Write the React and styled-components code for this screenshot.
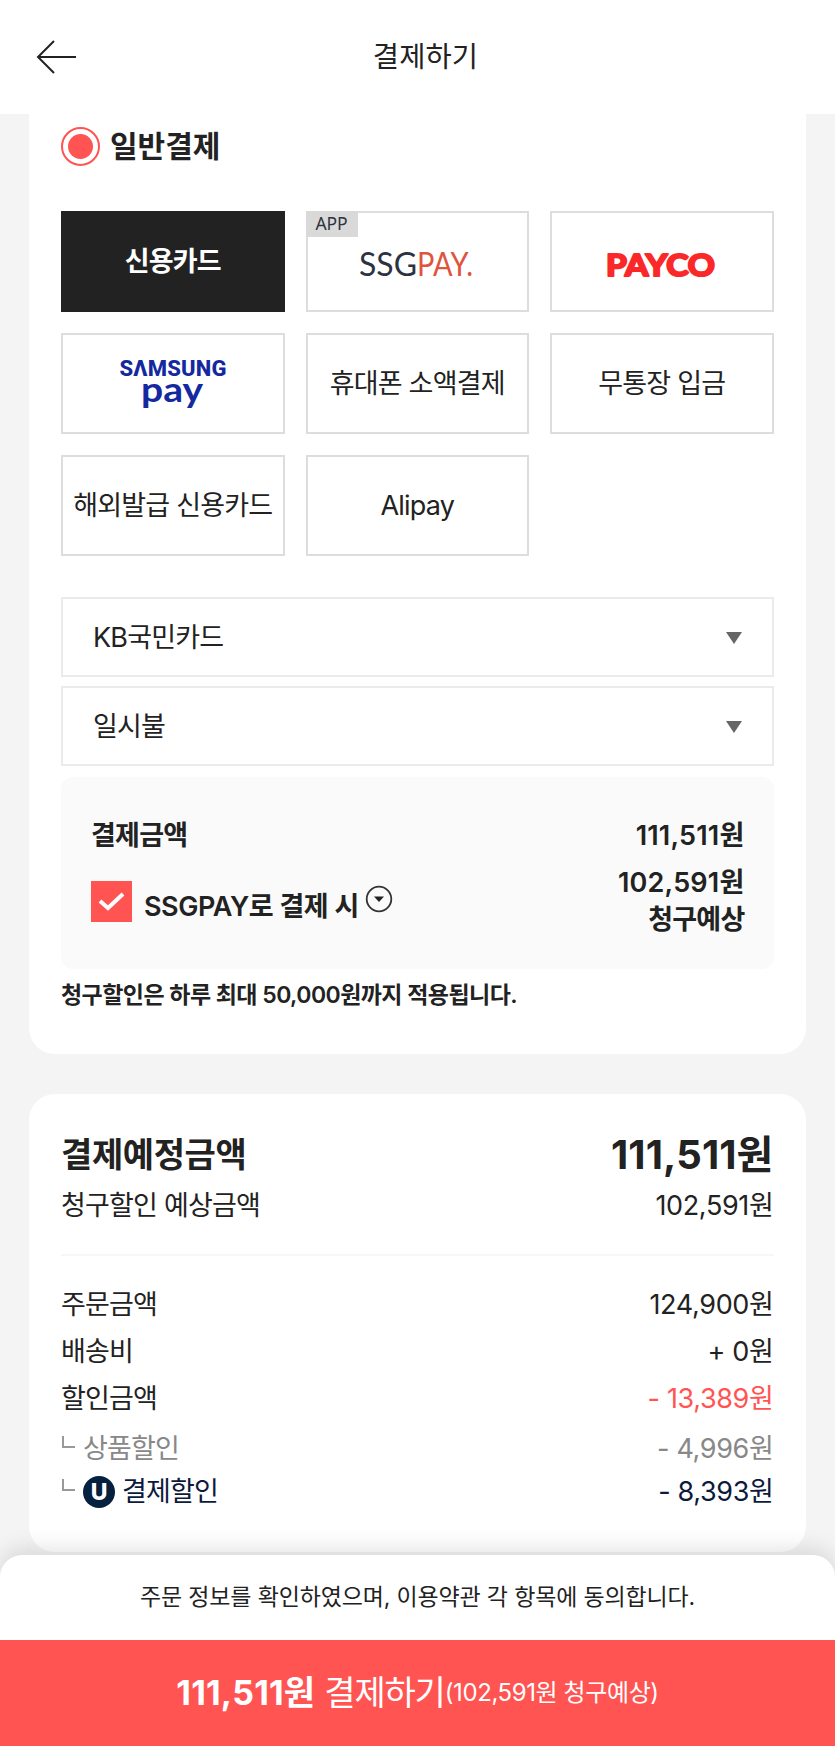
import React, { useState } from "react";
import styled, { createGlobalStyle } from "styled-components";

const GlobalStyle = createGlobalStyle`
  * {
    box-sizing: border-box;
  }
  body {
    margin: 0;
    background: #f4f4f4;
    color: #222;
    font-family: Inter, "Noto Sans CJK KR", sans-serif;
    font-weight: 400;
    line-height: 1.2;
  }
  button {
    font-family: inherit;
    font-weight: inherit;
    line-height: inherit;
    color: inherit;
    cursor: pointer;
  }
`;

const Page = styled.div`
  width: 835px;
  height: 1746px;
  overflow: hidden;
  display: flex;
  flex-direction: column;
`;

const Header = styled.header`
  display: grid;
  grid-template-columns: 96px 1fr 80px;
  align-items: center;
  flex: none;
  height: 114px;
  padding: 0 15px 1px;
  background: #fff;

  h1 {
    margin: 0;
    text-align: center;
    font-size: 28.5px;
    font-weight: 400;
    line-height: 40px;
    letter-spacing: 0.1px;
  }
`;

const BackButton = styled.button`
  display: flex;
  padding: 0 0 0 21px;
  border: 0;
  background: none;
`;

const Content = styled.main`
  flex: none;
  height: 1441px;
  padding: 0 29px 0 28.5px;
`;

const Card = styled.section`
  padding: 0 32.5px;
  background: #fff;
`;

const PayCard = styled(Card)`
  height: 940px;
  border-radius: 0 0 26px 26px;
`;

const TotalCard = styled(Card)`
  height: 458px;
  margin-top: 40px;
  padding-top: 37px;
  border-radius: 26px;
`;

const MethodTitle = styled.label`
  display: flex;
  align-items: center;
  gap: 10px;
  height: 64px;
  font-size: 30px;
  font-weight: 700;
  letter-spacing: 0;
`;

const Radio = styled.span`
  display: flex;
  align-items: center;
  justify-content: center;
  width: 39px;
  height: 39px;
  border: 2px solid #ff5452;
  border-radius: 50%;

  &::after {
    content: "";
    width: 25px;
    height: 25px;
    border-radius: 50%;
    background: #ff5452;
  }
`;

const Methods = styled.div`
  display: grid;
  grid-template-columns: repeat(3, 1fr);
  grid-auto-rows: 101px;
  gap: 21px;
  margin-top: 33px;
`;

const Method = styled.button`
  position: relative;
  display: flex;
  align-items: center;
  justify-content: center;
  padding: 2px 0 0;
  border: 2px solid ${(props) => (props.$active ? "#222" : "#ddd")};
  background: ${(props) => (props.$active ? "#222" : "#fff")};
  color: ${(props) => (props.$active ? "#fff" : "#222")};
  font-size: 27px;
  font-weight: ${(props) => (props.$active ? 700 : "inherit")};
  letter-spacing: -0.8px;
  white-space: nowrap;
`;

const AppBadge = styled.span`
  position: absolute;
  top: -2px;
  left: -2px;
  width: 52px;
  height: 26px;
  background: #d9d9d9;
  color: #2f3440;
  font-family: "Noto Sans", sans-serif;
  font-size: 17.5px;
  line-height: 25px;
  font-weight: 400;
  letter-spacing: -0.2px;
  text-align: center;
`;

const Selects = styled.div`
  display: grid;
  gap: 9px;
  margin-top: 41px;
`;

const Select = styled.button`
  display: flex;
  align-items: center;
  justify-content: space-between;
  height: 80px;
  padding: 2px 30px 0;
  border: 2px solid #ebebeb;
  background: #fff;
  font-size: 27px;
  letter-spacing: -0.8px;
`;

const Amount = styled.div`
  height: 192px;
  margin-top: 11px;
  padding: 40px 29px 0 30px;
  border-radius: 12px;
  background: #fafafa;
  font-size: 27px;
  font-weight: 600;
  line-height: 38px;
  letter-spacing: -0.75px;
`;

const Price = styled.span`
  letter-spacing: 0.2px;
`;

const Row = styled.div`
  display: flex;
  justify-content: space-between;
`;

const SsgRow = styled(Row)`
  margin-top: 9px;
  line-height: 37px;
  text-align: right;
`;

const SsgLabel = styled.div`
  display: flex;
  padding-top: 17px;

  > span {
    margin: 7px 6px 0 12px;
    letter-spacing: -0.45px;
  }
  > svg {
    margin-top: 4px;
  }
`;

const CheckBox = styled.div`
  display: flex;
  align-items: center;
  justify-content: center;
  width: 41px;
  height: 41px;
  background: #ff5452;
`;

const Notice = styled.p`
  margin: 9px 0 0;
  font-size: 23px;
  font-weight: 600;
  line-height: 34px;
  letter-spacing: -0.55px;
`;

const TotalRow = styled(Row)`
  align-items: center;
  height: 48px;
  margin-bottom: 4px;
  font-size: 34px;
  font-weight: 650;
  letter-spacing: -0.4px;

  strong {
    font-size: 40px;
    font-weight: 650;
    letter-spacing: 0.1px;
  }
`;

const Divider = styled.hr`
  height: 2px;
  margin: 24px 0 26px;
  border: 0;
  background: #f7f7f7;
`;

const PriceRow = styled(Row)`
  align-items: center;
  height: ${(props) => props.$height || 47}px;
  color: ${(props) => props.$color || "#222"};
  font-size: 27px;
  letter-spacing: -0.8px;
`;

const PriceValue = styled.span`
  color: ${(props) => props.$color || "inherit"};
  letter-spacing: -0.35px;
`;

const PriceName = styled.span`
  display: flex;
  align-items: center;
`;

const Branch = styled.i`
  width: 13px;
  height: 12px;
  margin: -14px 8px 0 1px;
  border: solid #999;
  border-width: 0 0 2px 2px;
`;

const UMark = styled.span`
  width: 32px;
  height: 32px;
  margin-right: 7px;
  border-radius: 50%;
  background: #06203f;
  color: #fff;
  font-size: 23px;
  font-weight: 800;
  line-height: 32px;
  letter-spacing: 0;
  text-align: center;
`;

const Footer = styled.footer`
  position: relative;
  flex: none;
  height: 191px;
  border-radius: 22px 22px 0 0;
  background: #fff;
  box-shadow: 0 -8px 20px rgba(0, 0, 0, 0.1);
`;

const Agree = styled.p`
  height: 85px;
  margin: 0;
  text-align: center;
  font-size: 23px;
  line-height: 85px;
  letter-spacing: -0.15px;
`;

const PayButton = styled.button`
  display: flex;
  align-items: center;
  justify-content: center;
  width: 100%;
  height: 106px;
  padding: 0;
  border: 0;
  background: #ff5452;
  color: #fff;
  font-size: 34px;
  line-height: 104px;
  letter-spacing: -1.2px;

  b {
    margin-right: 9px;
    letter-spacing: 0.2px;
  }
  small {
    font-size: 24px;
    letter-spacing: -0.4px;
  }
`;

const BackIcon = () => (
  <svg width="41" height="34" viewBox="0 0 41 34" fill="none" stroke="#222" strokeWidth="2">
    <path d="M18 1 2 17l16 16M2 17h38" />
  </svg>
);

const Caret = () => (
  <svg width="16" height="12" viewBox="0 0 16 12">
    <path d="M0 0h16L8 12z" fill="#666" />
  </svg>
);

const Check = () => (
  <svg width="27" height="21" viewBox="0 0 27 21" fill="none" stroke="#fff" strokeWidth="4">
    <path d="M2 10l8 7L25 3" />
  </svg>
);

const MoreIcon = () => (
  <svg width="28" height="28" viewBox="0 0 28 28">
    <circle cx="14" cy="14" r="12.3" fill="none" stroke="#333" strokeWidth="1.8" />
    <path d="M9 11.5h10L14 17z" fill="#222" />
  </svg>
);

const Logo = styled.svg`
  width: 120px;
  height: 60px;
  overflow: visible;
  font-family: Lato, sans-serif;
  letter-spacing: 0;
`;

const SsgPayLogo = () => (
  <Logo viewBox="0 0 120 60" fontSize="33">
    <text x="2" y="43" textLength="58" lengthAdjust="spacingAndGlyphs" fill="#2c3242">SSG</text>
    <text x="60" y="43" textLength="56" lengthAdjust="spacingAndGlyphs" fill="#e0533d">PAY.</text>
  </Logo>
);

const PaycoLogo = () => (
  <Logo viewBox="0 0 120 60" fontSize="31" fontWeight="700">
    <text
      x="4"
      y="42.5"
      textLength="109"
      lengthAdjust="spacingAndGlyphs"
      fill="#fa2828"
      stroke="#fa2828"
      strokeWidth="2.2"
      strokeLinejoin="round"
    >
      PAYCO
    </text>
  </Logo>
);

const SamsungPayLogo = () => (
  <Logo viewBox="0 0 120 60" fill="#1428a0" aria-label="SAMSUNG pay">
    <text
      x="6.5"
      y="20.5"
      textLength="107"
      fontFamily="Roboto, sans-serif"
      fontSize="22"
      fontWeight="800"
    >
      SΛMSUNG
    </text>
    <text
      x="28"
      y="47"
      textLength="62"
      lengthAdjust="spacingAndGlyphs"
      fontSize="35"
      fontWeight="700"
    >
      pay
    </text>
  </Logo>
);

const methods = [
  { id: "card", label: "신용카드" },
  { id: "ssgpay", label: <SsgPayLogo />, app: true },
  { id: "payco", label: <PaycoLogo /> },
  { id: "samsung", label: <SamsungPayLogo /> },
  { id: "phone", label: "휴대폰 소액결제" },
  { id: "bank", label: "무통장 입금" },
  { id: "overseas", label: "해외발급 신용카드" },
  { id: "alipay", label: "Alipay" },
];

export default function App() {
  const [method, setMethod] = useState("card");

  return (
    <Page>
      <GlobalStyle />
      <Header>
        <BackButton>
          <BackIcon />
        </BackButton>
        <h1>결제하기</h1>
      </Header>

      <Content>
        <PayCard>
          <MethodTitle>
            <Radio />
            일반결제
          </MethodTitle>
          <Methods>
            {methods.map((item) => (
              <Method
                key={item.id}
                $active={item.id === method}
                onClick={() => setMethod(item.id)}
              >
                {item.app && <AppBadge>APP</AppBadge>}
                {item.label}
              </Method>
            ))}
          </Methods>

          <Selects>
            <Select>
              KB국민카드
              <Caret />
            </Select>
            <Select>
              일시불
              <Caret />
            </Select>
          </Selects>

          <Amount>
            <Row>
              <span>결제금액</span>
              <Price>111,511원</Price>
            </Row>
            <SsgRow>
              <SsgLabel>
                <CheckBox>
                  <Check />
                </CheckBox>
                <span>SSGPAY로 결제 시</span>
                <MoreIcon />
              </SsgLabel>
              <div>
                <Price>102,591원</Price>
                <br />
                청구예상
              </div>
            </SsgRow>
          </Amount>
          <Notice>청구할인은 하루 최대 50,000원까지 적용됩니다.</Notice>
        </PayCard>

        <TotalCard>
          <TotalRow>
            <span>결제예정금액</span>
            <strong>111,511원</strong>
          </TotalRow>
          <PriceRow>
            <span>청구할인 예상금액</span>
            <PriceValue>102,591원</PriceValue>
          </PriceRow>
          <Divider />
          <PriceRow>
            <span>주문금액</span>
            <PriceValue>124,900원</PriceValue>
          </PriceRow>
          <PriceRow>
            <span>배송비</span>
            <PriceValue>+ 0원</PriceValue>
          </PriceRow>
          <PriceRow>
            <span>할인금액</span>
            <PriceValue $color="#ff5452">- 13,389원</PriceValue>
          </PriceRow>
          <PriceRow $color="#888" $height={52}>
            <PriceName>
              <Branch />
              상품할인
            </PriceName>
            <PriceValue>- 4,996원</PriceValue>
          </PriceRow>
          <PriceRow $color="#0c1a3c" $height={34}>
            <PriceName>
              <Branch />
              <UMark>U</UMark>
              결제할인
            </PriceName>
            <PriceValue>- 8,393원</PriceValue>
          </PriceRow>
        </TotalCard>
      </Content>

      <Footer>
        <Agree>주문 정보를 확인하였으며, 이용약관 각 항목에 동의합니다.</Agree>
        <PayButton>
          <b>111,511원</b>
          결제하기
          <small>(102,591원 청구예상)</small>
        </PayButton>
      </Footer>
    </Page>
  );
}
